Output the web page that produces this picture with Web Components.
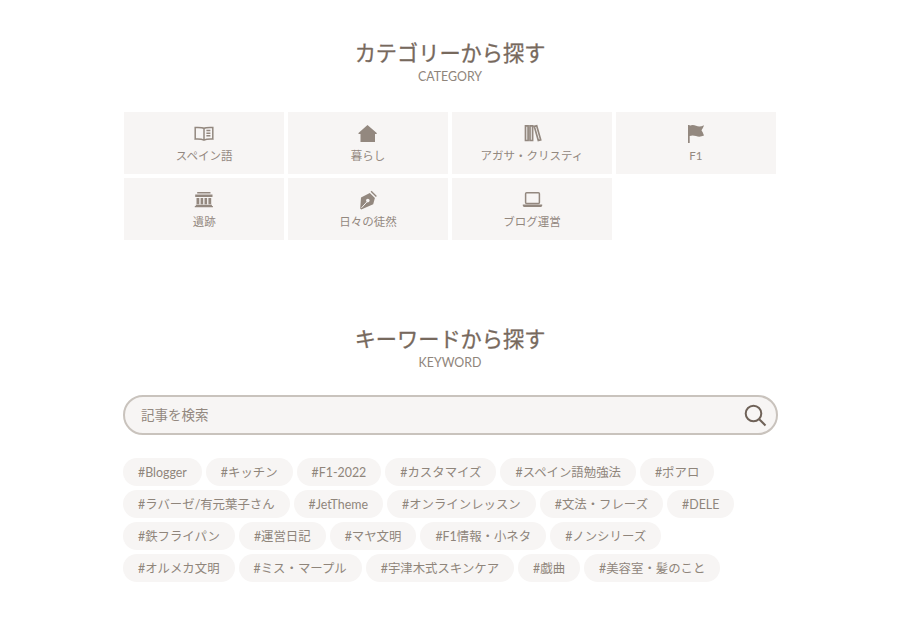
<!DOCTYPE html>
<html lang="ja">
<head>
<meta charset="utf-8">
<title>カテゴリーから探す</title>
<style>
  html, body { margin: 0; background: #fff; }
  body { font-family: Lato, "Noto Sans CJK JP", sans-serif; color: #77695d; }
</style>
</head>
<body>
<explore-page>
  <section-head title="カテゴリーから探す" sub="CATEGORY"></section-head>
  <category-grid>
    <category-card icon="book">スペイン語</category-card>
    <category-card icon="home">暮らし</category-card>
    <category-card icon="books">アガサ・クリスティ</category-card>
    <category-card icon="flag">F1</category-card>
    <category-card icon="museum">遺跡</category-card>
    <category-card icon="pen">日々の徒然</category-card>
    <category-card icon="laptop">ブログ運営</category-card>
  </category-grid>
  <section-head class="second" title="キーワードから探す" sub="KEYWORD"></section-head>
  <search-box placeholder="記事を検索"></search-box>
  <tag-list>
    <tag-pill>#Blogger</tag-pill><tag-pill>#キッチン</tag-pill><tag-pill>#F1-2022</tag-pill><tag-pill>#カスタマイズ</tag-pill><tag-pill>#スペイン語勉強法</tag-pill><tag-pill>#ポアロ</tag-pill>
    <tag-pill>#ラバーゼ/有元葉子さん</tag-pill><tag-pill>#JetTheme</tag-pill><tag-pill>#オンラインレッスン</tag-pill><tag-pill>#文法・フレーズ</tag-pill><tag-pill>#DELE</tag-pill>
    <tag-pill>#鉄フライパン</tag-pill><tag-pill>#運営日記</tag-pill><tag-pill>#マヤ文明</tag-pill><tag-pill>#F1情報・小ネタ</tag-pill><tag-pill>#ノンシリーズ</tag-pill>
    <tag-pill>#オルメカ文明</tag-pill><tag-pill>#ミス・マープル</tag-pill><tag-pill>#宇津木式スキンケア</tag-pill><tag-pill>#戯曲</tag-pill><tag-pill>#美容室・髪のこと</tag-pill>
  </tag-list>
</explore-page>
<script>
const icons = {
  book: '<path fill="none" stroke="currentColor" stroke-width="1.500" d="M10 5.400C8.600 4.500 5.500 4.300 1.200 4.500v11.600c3.800-.2 6.800 0 8.800 1 2-1 5-1.200 8.800-1V4.500c-4.300-.2-7.400 0-8.800.9zM10 5.400V17M12.400 7.600h4M12.400 10.200h4M12.400 12.800h4"/>',
  home: '<path fill="currentColor" d="M9.500 2 19 10.300l-.7.8H17V19H2.500v-7.900H.9l-.7-.8z"/>',
  books: '<path fill="none" stroke="currentColor" stroke-width="1.700" d="M3.500 2.800h2.600V17.500H3.500zM8 2.800h2.600V17.500H8zM12.300 3.400l2.400-.7 4 14.100-2.400.7z"/>',
  flag: '<path fill="currentColor" d="M2 2h1.700v.8C6 1.700 8 2 10 2.800c2.500 1 5 .9 8-.6-.700 2-1.400 3.500-2.500 5 1 1.500 1.700 3 2.500 5.300-2.800 1.300-5.300 1.500-8 .6-2.300-.8-4.300-1-6.300 0V20H2z"/>',
  museum: '<path fill="currentColor" d="M3.200 3h13.300v1.500H3.200zM1.200 5.600h17.300v2.300H1.200zM2.500 8.900h2.800v6.400H2.500zM6.600 8.900h2.600v6.400H6.600zM10.500 8.900h2.600v6.400h-2.600zM14.400 8.900h2.800v6.400h-2.800zM1.800 15.800h16.100v1.100H1.800zM.8 17h18.100v1.200H.8z"/>',
  pen: '<path fill="currentColor" fill-rule="evenodd" d="M13.600 1.800l5.300 5.200-1 1-5.300-5.200zM11.800 3.900l5.100 5.100-1.700 6.200-12 5.300-1-1L3 8.400z"/><circle cx="9.800" cy="11.600" r="1.800" fill="#f7f5f4"/><path d="M3.500 18.800 8.800 13" stroke="#f7f5f4" stroke-width="1" fill="none"/>',
  laptop: '<rect x="3.600" y="3.800" width="13.800" height="10.800" rx="1" fill="none" stroke="currentColor" stroke-width="1.500"/><path fill="currentColor" d="M.8 15.600h19.400v.9c0 .8-.6 1.400-1.400 1.400H2.200c-.8 0-1.400-.6-1.400-1.400z"/>'
};

class ExplorePage extends HTMLElement {
  constructor() {
    super();
    this.attachShadow({mode: 'open'}).innerHTML = `
      <style>
        :host { display: block; width: 652px; margin: 0 auto; padding-top: 38px; }
        ::slotted(.second) { margin-top: 84px; }
      </style>
      <slot></slot>`;
  }
}

class SectionHead extends HTMLElement {
  constructor() {
    super();
    this.attachShadow({mode: 'open'}).innerHTML = `
      <style>
        :host { display: block; text-align: center; }
        h2 { margin: 0; font-size: 21.200px; line-height: 30px; font-weight: 400; color: #77695d; -webkit-text-stroke: .3px #77695d; }
        p { margin: 1px 0 0; font-size: 12.400px; line-height: 16px; color: #8f857b; }
      </style>
      <h2>${this.getAttribute('title')}</h2>
      <p>${this.getAttribute('sub')}</p>`;
  }
}

class CategoryGrid extends HTMLElement {
  constructor() {
    super();
    this.attachShadow({mode: 'open'}).innerHTML = `
      <style>
        :host { display: grid; grid-template-columns: repeat(4, 1fr); column-gap: 3.500px; row-gap: 4px; margin-top: 27px; }
      </style>
      <slot></slot>`;
  }
}

class CategoryCard extends HTMLElement {
  constructor() {
    super();
    this.attachShadow({mode: 'open'}).innerHTML = `
      <style>
        :host { display: flex; flex-direction: column; align-items: center; height: 62px; padding-top: 11px; box-sizing: border-box; background: #f7f5f4; color: #93887f; font-size: 11.500px; }
        svg { width: 20px; height: 20px; display: block; overflow: visible; }
        span { margin-top: 5px; line-height: 16px; }
      </style>
      <svg viewBox="0 0 20 20">${icons[this.getAttribute('icon')]}</svg>
      <span><slot></slot></span>`;
  }
}

class SearchBox extends HTMLElement {
  constructor() {
    super();
    this.attachShadow({mode: 'open'}).innerHTML = `
      <style>
        :host { display: flex; align-items: center; height: 40px; margin: 24px -2px 0 -1px; padding: 0 9px 0 16px; box-sizing: border-box; border: 2px solid #c9c3bd; border-radius: 20px; background: #f7f5f4; }
        input { flex: 1; min-width: 0; border: 0; outline: 0; padding: 0; background: none; font: 13.500px Lato, "Noto Sans CJK JP", sans-serif; color: #77695d; }
        input::placeholder { color: #93887f; opacity: 1; }
        svg { width: 24px; height: 24px; display: block; color: #6f6258; }
      </style>
      <input type="text" placeholder="${this.getAttribute('placeholder')}">
      <svg viewBox="0 0 24 24"><circle cx="10.500" cy="10.500" r="7.800" fill="none" stroke="currentColor" stroke-width="2"/><path d="M16 16l6.500 6.500" fill="none" stroke="currentColor" stroke-width="2"/></svg>`;
  }
}

class TagList extends HTMLElement {
  constructor() {
    super();
    this.attachShadow({mode: 'open'}).innerHTML = `
      <style>
        :host { display: flex; flex-wrap: wrap; gap: 4px; margin: 23px 8px 0 -1px; }
      </style>
      <slot></slot>`;
  }
}

class TagPill extends HTMLElement {
  constructor() {
    super();
    this.attachShadow({mode: 'open'}).innerHTML = `
      <style>
        :host { display: block; height: 28px; line-height: 30px; padding: 0 15px; border-radius: 14px; background: #f7f5f4; color: #8f857b; font-size: 12.400px; white-space: nowrap; }
      </style>
      <slot></slot>`;
  }
}

customElements.define('explore-page', ExplorePage);
customElements.define('section-head', SectionHead);
customElements.define('category-grid', CategoryGrid);
customElements.define('category-card', CategoryCard);
customElements.define('search-box', SearchBox);
customElements.define('tag-list', TagList);
customElements.define('tag-pill', TagPill);
</script>
</body>
</html>
